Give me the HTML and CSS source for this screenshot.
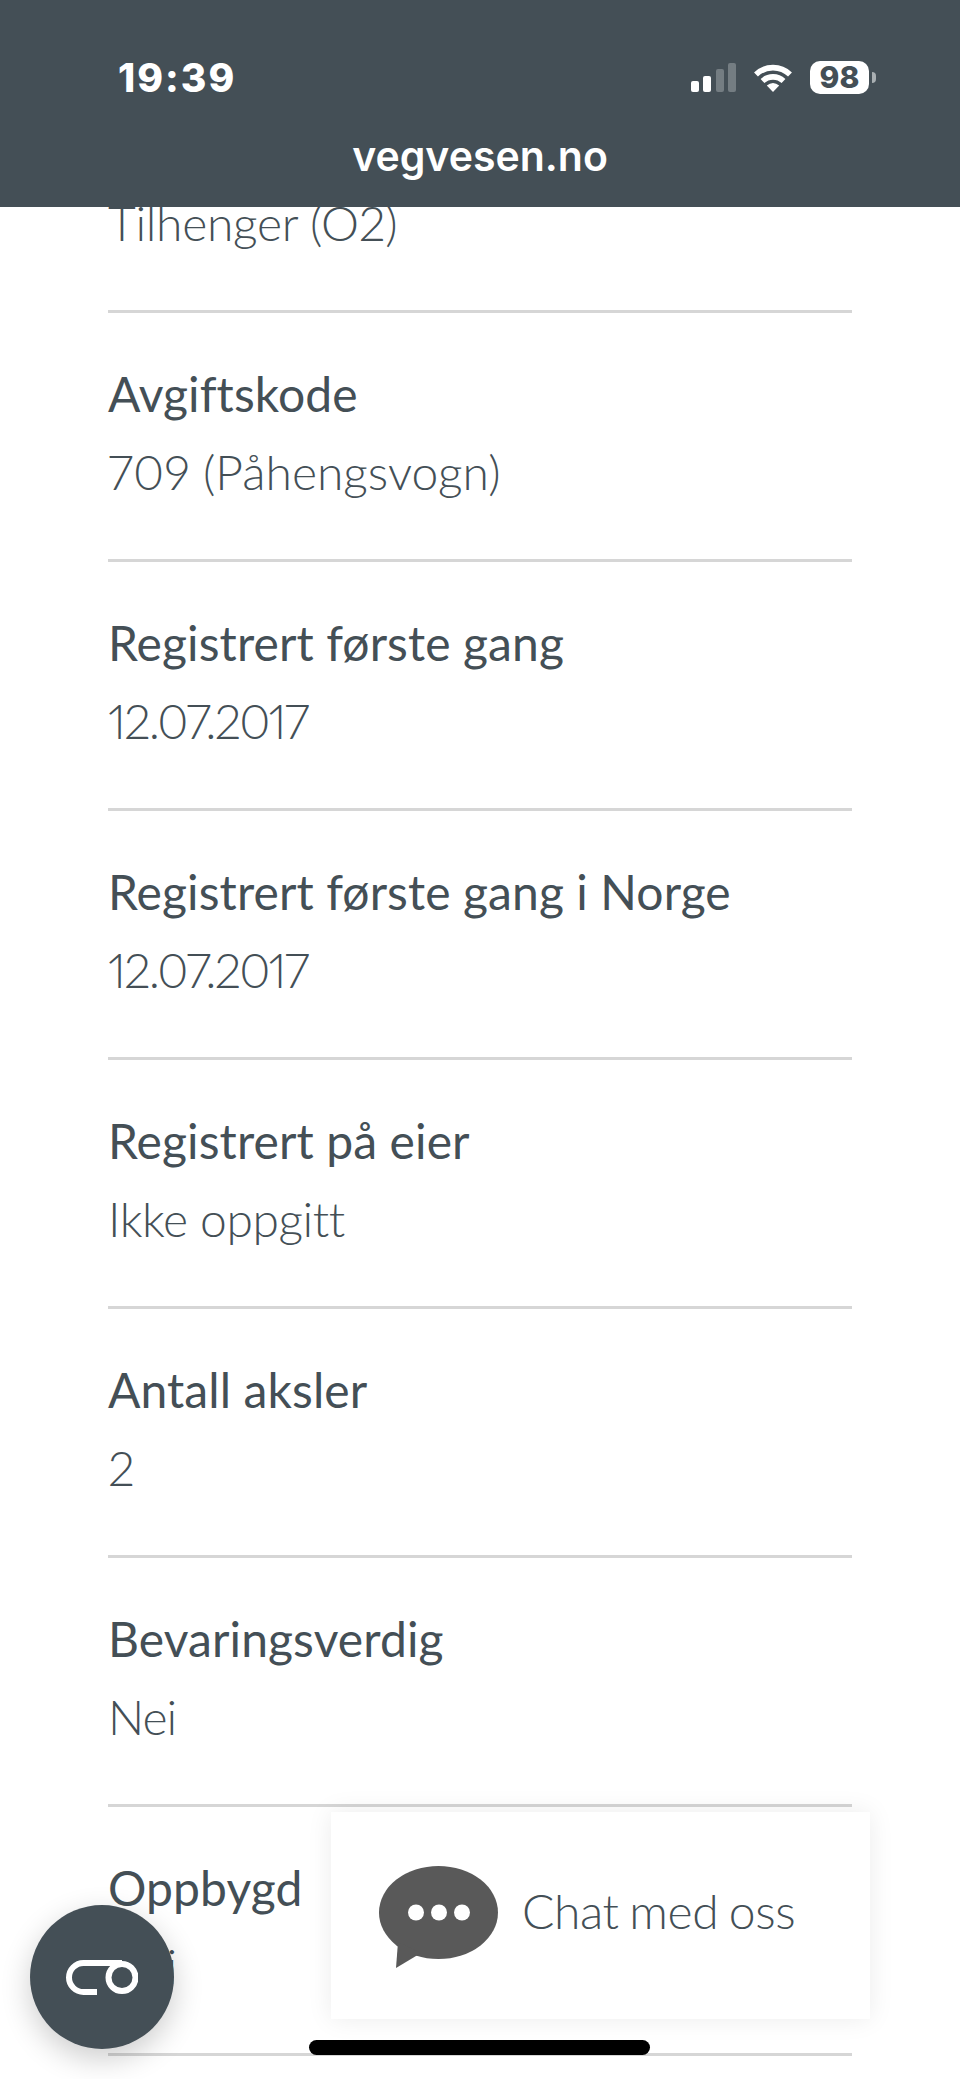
FILE: index.html
```html
<!DOCTYPE html>
<html lang="no">
<head>
<meta charset="utf-8">
<title>vegvesen.no</title>
<link rel="stylesheet" href="styles.css">
</head>
<body>
<header class="top">
  <div class="status">
    <span class="time">19:39</span>
    <div class="status-icons">
      <div class="signal">
        <span class="bar bar-1"></span>
        <span class="bar bar-2"></span>
        <span class="bar bar-3"></span>
        <span class="bar bar-4"></span>
      </div>
      <svg class="wifi" viewBox="0 0 40 29" width="40" height="29" aria-hidden="true">
        <path d="M3 11.5A24.5 24.5 0 0 1 37 11.5" fill="none" stroke="#fff" stroke-width="5.6"/>
        <path d="M9.5 18A15.5 15.5 0 0 1 30.5 18" fill="none" stroke="#fff" stroke-width="5.6"/>
        <path d="M13.8 22.5Q20 17.5 26.2 22.5L20 29Z" fill="#fff"/>
      </svg>
      <div class="battery">
        <span class="battery-body">98</span>
        <span class="battery-nub"></span>
      </div>
    </div>
  </div>
  <div class="domain">vegvesen.no</div>
</header>
<main class="list">
  <section class="row row-cut"><p class="value">Tilhenger (O2)</p></section>
  <section class="row"><h2 class="label">Avgiftskode</h2><p class="value">709 (Påhengsvogn)</p></section>
  <section class="row"><h2 class="label">Registrert første gang</h2><p class="value value-date">12.07.2017</p></section>
  <section class="row"><h2 class="label">Registrert første gang i Norge</h2><p class="value value-date">12.07.2017</p></section>
  <section class="row"><h2 class="label">Registrert på eier</h2><p class="value value-tight">Ikke oppgitt</p></section>
  <section class="row"><h2 class="label">Antall aksler</h2><p class="value value-tight">2</p></section>
  <section class="row"><h2 class="label">Bevaringsverdig</h2><p class="value value-short">Nei</p></section>
  <section class="row"><h2 class="label">Oppbygd</h2><p class="value value-short">Nei</p></section>
</main>
<button class="fab" type="button" aria-label="Innstillinger">
  <svg viewBox="0 0 72 35" width="72" height="35" aria-hidden="true">
    <path d="M31 32H17.5A14.5 14.5 0 0 1 17.5 3H56" fill="none" stroke="#fff" stroke-width="6"/>
    <circle cx="56" cy="17.5" r="13.5" fill="none" stroke="#fff" stroke-width="6"/>
  </svg>
</button>
<div class="chat">
  <svg class="chat-icon" viewBox="0 0 119 102" width="119" height="102" aria-hidden="true">
    <ellipse cx="59.5" cy="46.5" rx="59.5" ry="46.5" fill="#595959"/>
    <path d="M19 76L17 102L42 87Z" fill="#595959"/>
    <circle cx="37" cy="46.5" r="8" fill="#fff"/>
    <circle cx="60" cy="46.5" r="8" fill="#fff"/>
    <circle cx="83" cy="46.5" r="8" fill="#fff"/>
  </svg>
  <span class="chat-text">Chat med oss</span>
</div>
<div class="home-bar"></div>
</body>
</html>
```
FILE: styles.css
```css
* { box-sizing: border-box; }
html, body { margin: 0; padding: 0; }
body {
  width: 960px;
  height: 2079px;
  overflow: hidden;
  position: relative;
  background: #fff;
  color: #444f56;
  font-family: "Lato", "Liberation Sans", sans-serif;
}
.top {
  position: relative;
  z-index: 2;
  height: 207px;
  background: #444f56;
  color: #fff;
  padding-top: 61px;
}
.status {
  display: flex;
  justify-content: space-between;
  align-items: flex-start;
  height: 33px;
  padding: 0 84px 0 118px;
}
.time {
  font-family: "Inter", "Liberation Sans", sans-serif;
  font-weight: 800;
  font-size: 39px;
  line-height: 33px;
  letter-spacing: 2px;
}
.status-icons {
  display: flex;
  align-items: flex-end;
  gap: 17px;
}
.signal {
  display: flex;
  align-items: flex-end;
  gap: 4.5px;
  height: 29px;
  margin-bottom: 2px;
}
.bar {
  width: 8px;
  border-radius: 2px;
  background: #fff;
}
.bar-1 { height: 11px; }
.bar-2 { height: 16px; }
.bar-3 { height: 23px; background: #747d82; }
.bar-4 { height: 29px; background: #747d82; }
.wifi { display: block; margin-bottom: 2px; }
.battery {
  display: flex;
  align-items: center;
  gap: 3px;
}
.battery-body {
  width: 59px;
  height: 33px;
  border-radius: 10px;
  background: #fff;
  color: #444f56;
  font-family: "Inter", "Liberation Sans", sans-serif;
  font-weight: 800;
  font-size: 30px;
  line-height: 33px;
  text-align: center;
}
.battery-nub {
  width: 4px;
  height: 11px;
  border-radius: 0 5px 5px 0;
  background: #a9afb2;
}
.domain {
  margin-top: 39px;
  text-align: center;
  font-family: "Inter", "Liberation Sans", sans-serif;
  font-weight: 600;
  font-size: 41px;
  line-height: 46px;
}
.list {
  margin-top: -23px;
  padding: 0 108px;
}
.row {
  height: 249px;
  padding-top: 42px;
  border-bottom: 3px solid #d6d6d6;
}
.row-cut {
  height: 129px;
  padding-top: 0;
}
.label, .value {
  margin: 0;
  font-size: 48px;
  line-height: 78px;
  font-variant-numeric: proportional-nums;
}
.label { font-weight: 400; letter-spacing: .1px; }
.value { font-weight: 300; }
.row-cut .value { letter-spacing: -.3px; }
.value-date { letter-spacing: -2px; }
.value-tight { letter-spacing: -.45px; }
.value-short { letter-spacing: -1px; }
.fab {
  position: absolute;
  left: 30px;
  top: 1905px;
  width: 144px;
  height: 144px;
  border: 0;
  padding: 0;
  border-radius: 50%;
  background: #444f56;
  display: flex;
  align-items: center;
  justify-content: center;
  box-shadow: 0 10px 30px rgba(0, 0, 0, .2);
}
.fab svg { display: block; margin-top: 1px; }
.chat {
  position: absolute;
  left: 331px;
  top: 1812px;
  width: 539px;
  height: 207px;
  background: #fff;
  box-shadow: 0 0 24px rgba(0, 0, 0, .08);
  display: flex;
  align-items: flex-start;
  padding: 54px 0 0 48px;
  gap: 24px;
}
.chat-icon { display: block; flex: none; }
.chat-text {
  font-weight: 300;
  font-size: 48px;
  line-height: 78px;
  margin-top: 6px;
  letter-spacing: -.4px;
  word-spacing: -2px;
}
.home-bar {
  position: absolute;
  left: 309px;
  top: 2040px;
  width: 341px;
  height: 15px;
  border-radius: 8px;
  background: #000;
}
```
